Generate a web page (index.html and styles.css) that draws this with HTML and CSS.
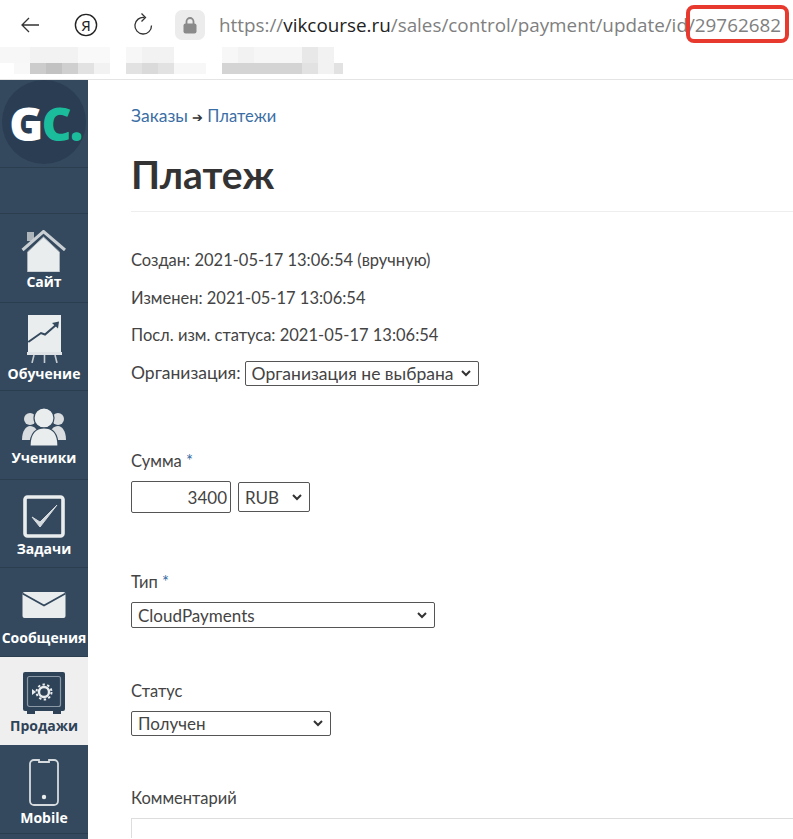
FILE: index.html
```html
<!DOCTYPE html>
<html lang="ru">
<head>
    <meta charset="UTF-8">
    <meta name="viewport" content="width=device-width, initial-scale=1.0">
    <title>Платеж</title>
    <link rel="stylesheet" href="styles.css">
</head>
<body>
    <div class="browser">
        <div class="toolbar">
            <svg class="tool-icon" width="24" height="24" viewBox="0 0 24 24"><path d="M21 12H4M11 5l-7 7 7 7" fill="none" stroke="#333" stroke-width="1.3"/></svg>
            <svg class="tool-icon yandex" width="24" height="24" viewBox="0 0 24 24"><circle cx="12" cy="12" r="10.6" fill="none" stroke="#222" stroke-width="1.4"/><text x="12" y="17.5" text-anchor="middle" class="yandex-letter">Я</text></svg>
            <svg class="tool-icon reload" width="24" height="24" viewBox="0 0 24 24"><path d="M13.5 4.5A8.3 8.3 0 1 0 20.5 12.5" fill="none" stroke="#333" stroke-width="1.3"/><path d="M10.5 0.5l4 4-4 4" fill="none" stroke="#333" stroke-width="1.3"/></svg>
            <div class="lock-box">
                <svg width="14" height="17" viewBox="0 0 14 17"><rect x="0.5" y="6.5" width="13" height="10" rx="2" fill="#8a8a8a"/><path d="M3.5 7V4.5a3.5 3.5 0 0 1 7 0V7" fill="none" stroke="#8a8a8a" stroke-width="1.8"/></svg>
            </div>
            <div class="url">https://<b>vikcourse.ru</b>/sales/control/payment/update/id/29762682</div>
        </div>
        <div class="bookmarks">
            <svg width="344" height="27" viewBox="0 0 344 27">
                <g fill="#f7f7f7"><rect x="0" y="0" width="30" height="16"/><rect x="126" y="0" width="16" height="16"/><rect x="222" y="0" width="16" height="16"/><rect x="174" y="16" width="32" height="11"/></g>
                <g fill="#f2f2f2"><rect x="30" y="0" width="48" height="16"/><rect x="78" y="0" width="32" height="16" fill="#f9f9f9"/><rect x="142" y="0" width="32" height="16"/><rect x="238" y="0" width="16" height="16"/><rect x="254" y="0" width="48" height="16" fill="#f6f6f6"/><rect x="318" y="0" width="16" height="16"/><rect x="14" y="16" width="16" height="11" fill="#f8f8f8"/><rect x="94" y="16" width="16" height="11"/><rect x="318" y="16" width="16" height="11"/></g>
                <rect x="302" y="0" width="16" height="16" fill="#e8e8e8"/>
                <g fill="#e2e2e2"><rect x="78" y="16" width="16" height="11"/><rect x="126" y="16" width="16" height="11"/><rect x="158" y="16" width="16" height="11"/><rect x="302" y="16" width="16" height="11"/><rect x="334" y="16" width="9" height="11"/></g>
                <g fill="#d4d4d4"><rect x="142" y="16" width="16" height="11" fill="#dadada"/><rect x="222" y="16" width="80" height="11"/></g>
                <rect x="30" y="16" width="16" height="11" fill="#cccccc"/><rect x="46" y="16" width="16" height="11" fill="#c2c2c2"/><rect x="62" y="16" width="16" height="11" fill="#cfcfcf"/>
            </svg>
        </div>
        <div class="url-mark"></div>
    </div>

    <div class="page">
        <nav class="sidebar">
            <div class="logo-cell">
                <div class="logo"><span class="logo-g">G</span><span class="logo-c">C.</span></div>
            </div>
            <div class="side-gap"></div>
            <a class="side-item item-site">
                <svg width="46" height="42" viewBox="0 0 46 42"><rect x="6" y="2" width="7" height="9" fill="#aeb6bc"/><path d="M6.5 42V22L22.5 7l16 15v20z" fill="#e9edee" stroke="#a9b1b8"/><path d="M1.5 20L22.5 1.5 44 20" fill="none" stroke="#c9cfd3" stroke-width="3"/></svg>
                <span>Сайт</span>
            </a>
            <a class="side-item item-learn">
                <svg width="35" height="48" viewBox="0 0 35 48"><rect x="1" y="0" width="33" height="37" fill="#e9edee"/><path d="M1.3 27L14 18l4 1.5L29 10" fill="none" stroke="#34495e" stroke-width="2"/><path d="M25 8l7-1.5-1 7z" fill="#34495e"/><rect x="0" y="37" width="35" height="3" fill="#dfe3e6"/><path d="M5 48l2-8M17.5 48v-8M30 48l-2-8" stroke="#c5cbd0" stroke-width="1.6"/></svg>
                <span>Обучение</span>
            </a>
            <a class="side-item item-students">
                <svg width="44" height="38" viewBox="0 0 44 38"><circle cx="8" cy="11" r="6" fill="#d9dde0"/><circle cx="36" cy="11" r="6" fill="#d9dde0"/><path d="M0 32c0-9 4-14 8-14s9 3 9 14z" fill="#d9dde0"/><path d="M27 32c0-11 5-14 9-14s8 5 8 14z" fill="#d9dde0"/><circle cx="22" cy="10" r="10" fill="#e9edee" stroke="#34495e" stroke-width="1.2"/><path d="M8 38c0-13 6-18 14-18s14 5 14 18z" fill="#e9edee" stroke="#34495e" stroke-width="1.2"/></svg>
                <span>Ученики</span>
            </a>
            <a class="side-item item-tasks">
                <svg width="42" height="43" viewBox="0 0 42 43"><rect x="2" y="2" width="38" height="39" rx="2.5" fill="none" stroke="#e9edee" stroke-width="3.6"/><path d="M9 22l8 10 17-22-17 17z" fill="#d5dade" stroke="#d5dade" stroke-width="1" stroke-linejoin="round"/></svg>
                <span>Задачи</span>
            </a>
            <a class="side-item item-mail">
                <svg width="44" height="26" viewBox="0 0 44 26"><rect x="0.5" y="0" width="43" height="26" rx="2" fill="#e9edee"/><path d="M0.5 1.5L22 13.5 43.5 1.5" fill="none" stroke="#34495e" stroke-width="1.8"/></svg>
                <span>Сообщения</span>
            </a>
            <a class="side-item active item-sales">
                <svg width="42" height="42" viewBox="0 0 42 42"><rect x="0" y="0" width="42" height="39" rx="2" fill="#2f4358"/><path d="M4 39h8v3H4zM30 39h8v3h-8z" fill="#2f4358"/><rect x="4.5" y="4.5" width="33" height="30" rx="2" fill="none" stroke="#8b98a5" stroke-width="1.2"/><circle cx="21" cy="20" r="5" fill="none" stroke="#e8ecee" stroke-width="2.4"/><circle cx="21" cy="20" r="7.5" fill="none" stroke="#e8ecee" stroke-width="2" stroke-dasharray="2.4 2.4"/><path d="M9 17l4 3-4 3z" fill="#e8ecee"/></svg>
                <span>Продажи</span>
            </a>
            <a class="side-item item-mobile">
                <svg width="30" height="47" viewBox="0 0 30 47"><path d="M5 1h5v2h10V1h5a4 4 0 0 1 4 4v37a4 4 0 0 1-4 4H5a4 4 0 0 1-4-4V5a4 4 0 0 1 4-4z" fill="none" stroke="#d5dade" stroke-width="1.8"/><circle cx="15" cy="38" r="2.2" fill="#e9edee"/></svg>
                <span>Mobile</span>
            </a>
        </nav>

        <main class="content">
            <div class="breadcrumbs"><a class="crumb-first">Заказы</a> <span class="crumb-arrow">➔</span> <a>Платежи</a></div>
            <h1>Платеж</h1>
            <div class="info-row">Создан: 2021-05-17 13:06:54 (вручную)</div>
            <div class="info-row">Изменен: 2021-05-17 13:06:54</div>
            <div class="info-row">Посл. изм. статуса: 2021-05-17 13:06:54</div>
            <div class="info-row org-row">
                <label>Организация:</label>
                <select class="org-select"><option>Организация не выбрана</option></select>
            </div>

            <div class="form-group sum-group">
                <label>Сумма <span class="req">*</span></label>
                <div class="sum-fields">
                    <input class="sum-input" type="text" value="3400">
                    <select class="currency"><option>RUB</option></select>
                </div>
            </div>

            <div class="form-group type-group">
                <label>Тип <span class="req">*</span></label>
                <select class="type-select"><option>CloudPayments</option></select>
            </div>

            <div class="form-group status-group">
                <label>Статус</label>
                <select class="status-select"><option>Получен</option></select>
            </div>

            <div class="form-group comment-group">
                <label>Комментарий</label>
                <textarea class="comment"></textarea>
            </div>
        </main>
    </div>
</body>
</html>
```

FILE: styles.css
```css
:root {
    --side-bg: #34495e;
    --side-line: #2b3e50;
    --text: #444;
    --link: #3a6ea5;
}

body {
    margin: 0;
    height: 839px;
    overflow: hidden;
    font-family: 'Lato', 'Open Sans', sans-serif;
    font-size: 16.5px;
    color: var(--text);
    background-color: #fff;
}

.browser {
    position: relative;
    height: 79px;
    border-bottom: 1px solid #e4e4e4;
    background-color: #fff;
}

.toolbar {
    display: flex;
    align-items: center;
    box-sizing: border-box;
    height: 47px;
    padding: 3px 0 0 18px;
}

.tool-icon {
    flex: none;
}

.yandex {
    margin-left: 32px;
}

.yandex-letter {
    font-family: 'Noto Sans', sans-serif;
    font-size: 15px;
    fill: #222;
}

.reload {
    margin-left: 33px;
}

.lock-box {
    display: flex;
    align-items: center;
    justify-content: center;
    flex: none;
    width: 30px;
    height: 30px;
    margin-left: 20px;
    border-radius: 7px;
    background-color: #ececec;
}

.url {
    margin-left: 14px;
    font-family: 'Open Sans', sans-serif;
    font-size: 18.85px;
    color: #808080;
    white-space: nowrap;
}

.url b {
    font-weight: 400;
    color: #222;
}

.bookmarks {
    height: 32px;
    line-height: 0;
}

.url-mark {
    position: absolute;
    left: 686px;
    top: 5px;
    width: 95px;
    height: 30px;
    border: 4px solid #e8392f;
    border-radius: 8px;
}

.page {
    display: flex;
    height: 759px;
}

.sidebar {
    flex: none;
    width: 88px;
    overflow: hidden;
    background-color: var(--side-bg);
}

.logo-cell {
    display: flex;
    justify-content: center;
    height: 87px;
    border-bottom: 1px solid var(--side-line);
}

.logo {
    box-sizing: border-box;
    width: 84px;
    height: 84px;
    padding-left: 3px;
    border-radius: 50%;
    background-color: #2b3d52;
    text-align: center;
    font-family: 'Open Sans', sans-serif;
    font-size: 46px;
    font-weight: 800;
    line-height: 86px;
    letter-spacing: -1.5px;
    white-space: nowrap;
}

.logo-g {
    color: #fff;
}

.logo-c {
    color: #1abc9c;
}

.side-gap {
    height: 45px;
    border-bottom: 1px solid var(--side-line);
}

.side-item {
    display: flex;
    flex-direction: column;
    align-items: center;
    box-sizing: border-box;
    height: 88.5px;
    border-bottom: 1px solid var(--side-line);
    color: #fff;
    font-family: 'Open Sans', sans-serif;
    font-size: 14px;
    font-weight: 700;
    line-height: 16px;
    white-space: nowrap;
}

.side-item svg {
    flex: none;
}

.item-site { padding-top: 16px; gap: 2px; }
.item-learn { padding-top: 12px; gap: 3px; }
.item-students { padding-top: 17px; gap: 4px; }
.item-tasks { padding-top: 15px; gap: 3px; }
.item-mail { padding-top: 24px; gap: 12px; }
.item-sales { padding-top: 15px; gap: 4px; }
.item-mobile { padding-top: 14px; gap: 4px; }

.side-item.active {
    border-bottom: none;
    background-color: #efefef;
    color: #2f4358;
}

.content {
    flex: 1;
    min-width: 0;
    overflow: hidden;
    padding: 26px 0 0 43px;
}

.breadcrumbs {
    line-height: 20px;
    color: var(--link);
}

.crumb-first {
    font-size: 17.5px;
}

.crumb-arrow {
    color: #333;
    font-size: 13px;
}

h1 {
    margin: 21px 0 0;
    padding-bottom: 11px;
    border-bottom: 1px solid #eee;
    font-size: 39px;
    font-weight: 700;
    line-height: 52px;
    color: #333;
}

.info-row {
    height: 20px;
    margin-bottom: 17.7px;
    line-height: 20px;
}

h1 + .info-row {
    margin-top: 38px;
}

.org-row {
    display: flex;
    align-items: center;
    gap: 4px;
    font-size: 17.5px;
}

label {
    display: block;
    line-height: 20px;
}

select, input, textarea {
    box-sizing: border-box;
    margin: 0;
    border: 1px solid #555;
    border-radius: 2px;
    background-color: #fff;
    font-family: inherit;
    font-size: 17px;
    color: var(--text);
}

/* native arrow is too thin, draw the chevron ourselves */
select {
    appearance: none;
    padding: 0 20px 0 6px;
    background-image: url("data:image/svg+xml,%3Csvg xmlns='http://www.w3.org/2000/svg' width='10' height='7'%3E%3Cpath d='M1 1l4 4 4-4' fill='none' stroke='%23333' stroke-width='2'/%3E%3C/svg%3E");
    background-repeat: no-repeat;
    background-position: right 7px center;
}

.org-select {
    width: 234px;
    height: 25px;
    font-size: 17.5px;
}

.form-group label {
    margin-bottom: 10px;
}

.req {
    color: var(--link);
}

.sum-group {
    margin-top: 68px;
}

.sum-fields {
    display: flex;
    align-items: center;
    gap: 7px;
}

.sum-input {
    width: 100px;
    height: 32px;
    padding: 0 3px;
    text-align: right;
}

.currency {
    width: 72px;
    height: 30px;
}

.type-group {
    margin-top: 59px;
}

.type-select {
    display: block;
    width: 304px;
    height: 26px;
}

.status-group {
    margin-top: 53px;
}

.status-select {
    display: block;
    width: 200px;
    height: 25px;
}

.comment-group {
    margin-top: 52px;
}

.comment {
    display: block;
    width: calc(100% + 10px);
    height: 20px;
    border-color: #ddd;
    border-bottom: none;
    border-radius: 0;
    resize: none;
}
```
